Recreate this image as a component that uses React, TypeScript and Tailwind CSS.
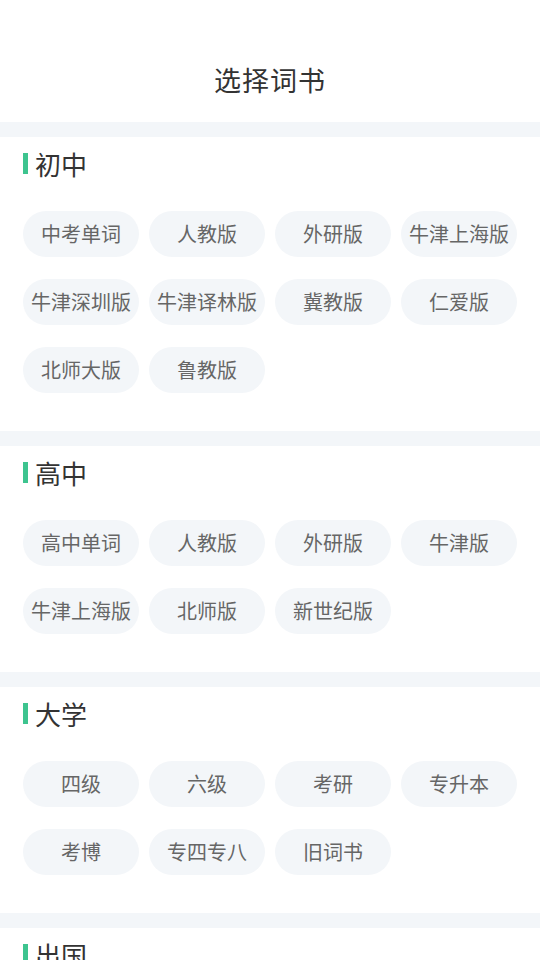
import React from "react";

const sections: { title: string; items: string[] }[] = [
  { title: "初中", items: ["中考单词", "人教版", "外研版", "牛津上海版", "牛津深圳版", "牛津译林版", "冀教版", "仁爱版", "北师大版", "鲁教版"] },
  { title: "高中", items: ["高中单词", "人教版", "外研版", "牛津版", "牛津上海版", "北师版", "新世纪版"] },
  { title: "大学", items: ["四级", "六级", "考研", "专升本", "考博", "专四专八", "旧词书"] },
  { title: "出国", items: ["雅思", "托福", "GRE", "GMAT"] },
];

export default function App() {
  return (
    <div
      className="w-[540px] min-h-[960px] bg-white"
      style={{ fontFamily: '"Noto Sans CJK SC", "Noto Sans", sans-serif' }}
    >
      <div className="h-[122px] flex items-center justify-center pt-[36px]">
        <h1 className="text-[27px] leading-none text-[#333333] tracking-[1px]">选择词书</h1>
      </div>
      {sections.map((s) => (
        <div key={s.title}>
          <div className="h-[15px] bg-[#f3f6f9]" />
          <div className="px-[23px] pt-[16px] pb-[38px]">
            <div className="flex items-center h-[21px]">
              <div className="w-[5px] h-[21px] bg-[#3dc48f]" />
              <span className="ml-[7px] text-[26px] leading-none text-[#333333]">{s.title}</span>
            </div>
            <div className="mt-[37px] grid grid-cols-4 gap-x-[10px] gap-y-[22px]">
              {s.items.map((it, i) => (
                <div
                  key={i}
                  className="h-[46px] rounded-full bg-[#f3f6f9] flex items-center justify-center text-[20px] text-[#666666] whitespace-nowrap"
                >
                  {it}
                </div>
              ))}
            </div>
          </div>
        </div>
      ))}
    </div>
  );
}
